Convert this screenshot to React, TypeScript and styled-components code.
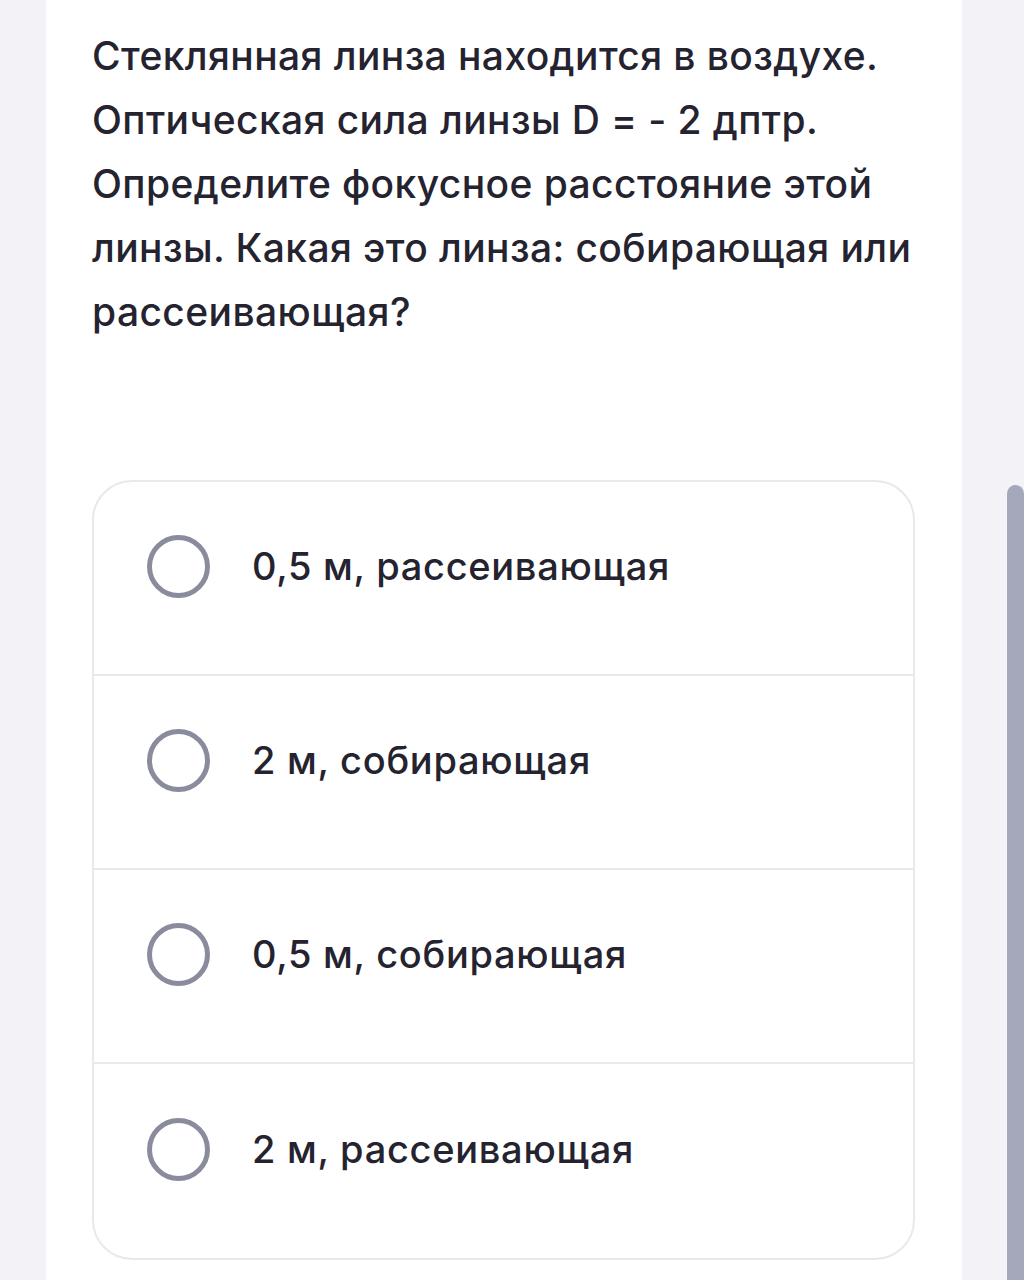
import styled, { createGlobalStyle } from 'styled-components';

const GlobalStyle = createGlobalStyle`
  html, body {
    margin: 0;
    padding: 0;
    background: #f2f2f7;
  }
  body {
    font-family: Inter, "Noto Sans", sans-serif;
    -webkit-font-smoothing: antialiased;
  }
`;

const Page = styled.div`
  display: flex;
  min-height: 1280px;
  background: #f2f2f7;
`;

const Card = styled.main`
  margin-left: 46px;
  width: 916px;
  min-height: 1280px;
  box-sizing: border-box;
  padding: 24px 47px 0 46px;
  background: #ffffff;
`;

const Question = styled.p`
  margin: 0 0 136px;
  font-size: 39px;
  line-height: 64px;
  font-weight: 500;
  color: #24232f;
  letter-spacing: 0.4px;
`;

const Options = styled.div`
  display: flex;
  flex-direction: column;
  border: 2.5px solid #e8e8ed;
  border-radius: 40px;
  overflow: hidden;
`;

const Option = styled.label<{ $last?: boolean }>`
  display: flex;
  align-items: center;
  gap: 42px;
  height: 194px;
  box-sizing: border-box;
  padding: 0 0 24px 53px;
  border-bottom: ${({ $last }) => ($last ? 'none' : '2.5px solid #e8e8ed')};
  cursor: pointer;
`;

const Radio = styled.span`
  flex: none;
  width: 63px;
  height: 63px;
  box-sizing: border-box;
  border: 5.5px solid #8a8b9c;
  border-radius: 50%;
`;

const OptionText = styled.span`
  font-size: 38px;
  font-weight: 500;
  color: #24232f;
  letter-spacing: 0.7px;
`;

const Scrollbar = styled.div`
  margin-left: auto;
  margin-top: 485px;
  width: 17px;
  height: 795px;
  background: #a5a8ba;
  border-radius: 9px 9px 0 0;
`;

const options = [
  '0,5 м, рассеивающая',
  '2 м, собирающая',
  '0,5 м, собирающая',
  '2 м, рассеивающая',
];

export default function App() {
  return (
    <>
      <GlobalStyle />
      <Page>
        <Card>
          <Question>
            Стеклянная линза находится в воздухе. Оптическая сила линзы D = - 2 дптр.
            Определите фокусное расстояние этой линзы. Какая это линза: собирающая или
            рассеивающая?
          </Question>
          <Options>
            {options.map((o, i) => (
              <Option key={i} $last={i === options.length - 1}>
                <Radio />
                <OptionText>{o}</OptionText>
              </Option>
            ))}
          </Options>
        </Card>
        <Scrollbar />
      </Page>
    </>
  );
}
